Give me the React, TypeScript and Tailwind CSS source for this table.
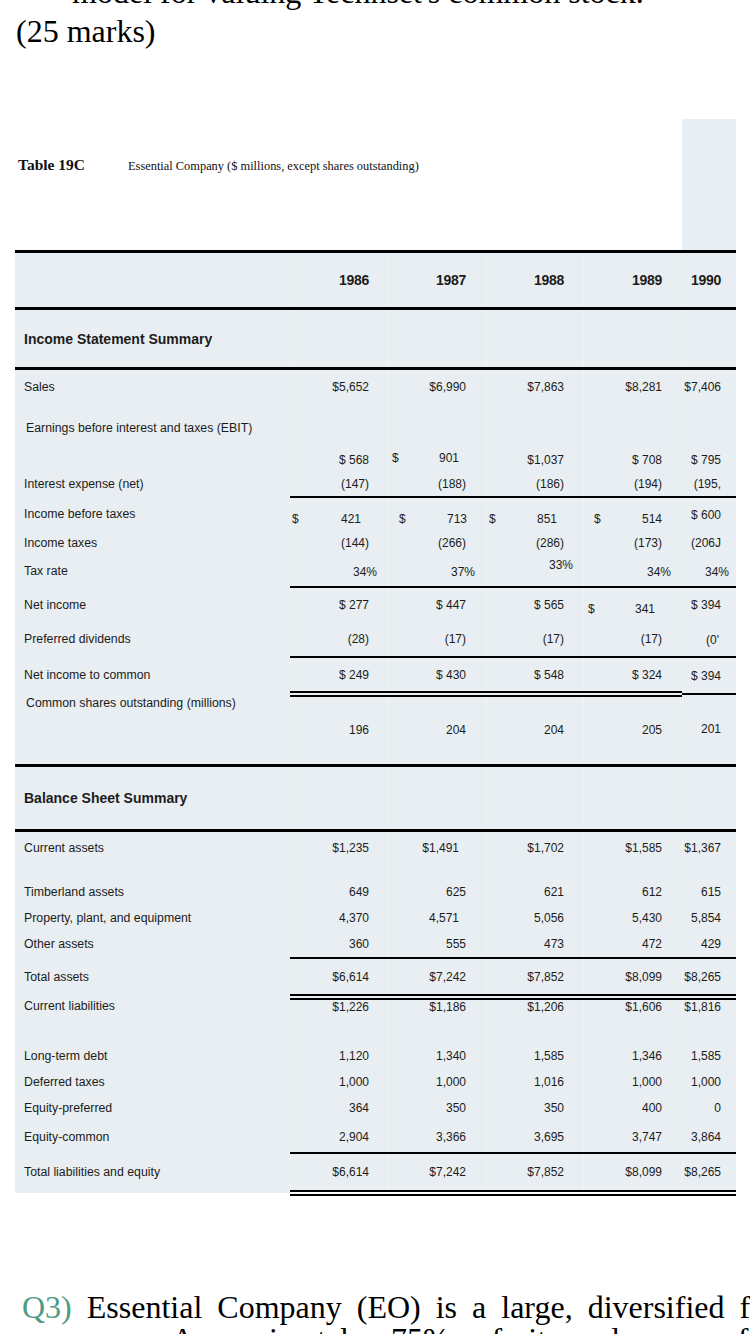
type Cell = { v: string; d?: string; pr?: string; y?: string };

const c = (v: string, o: Partial<Cell> = {}): Cell => ({ v, ...o });
const n = (...vals: string[]): Cell[] => vals.map((v) => ({ v }));

// column widths and default right padding (right edges at 369/466/564/662/721)
const COLS = ["w-[98px]", "w-[98px]", "w-[97px]", "w-[99px]", "w-[54px]"];
const PR = ["pr-[19px]", "pr-[20px]", "pr-[19px]", "pr-[20px]", "pr-[15px]"];

const EMPTY: Cell[] = n("", "", "", "", "");

function Row({
  label,
  cells = EMPTY,
  h,
  lc = "text-[12.3px]",
}: {
  label?: React.ReactNode;
  cells?: Cell[];
  h: string;
  lc?: string;
}) {
  return (
    <div className={`flex ${h}`}>
      <div className={`w-[275px] flex items-center pl-[9px] whitespace-nowrap ${lc}`}>{label}</div>
      {cells.map((cell, i) => (
        <div
          key={i}
          className={`${COLS[i]} flex items-center border-l border-[#eef3f5] whitespace-nowrap ${cell.y ?? ""}`}
        >
          {cell.d && <span className={cell.d}>$</span>}
          <span className={`ml-auto ${cell.pr ?? PR[i]}`}>{cell.v}</span>
        </div>
      ))}
    </div>
  );
}

const Thick = () => <div className="h-[3px] bg-black" />;
const Part = () => <div className="ml-[275px] h-[2px] bg-black" />;
const Double = ({ h = "h-[6px]", ml = "ml-[275px]" }: { h?: string; ml?: string }) => (
  <div className={`${ml} flex flex-col justify-between ${h}`}>
    <div className="h-[2px] bg-black" />
    <div className="h-[2px] bg-black" />
  </div>
);

export default function App() {
  return (
    <div className="w-[750px] h-[1334px] overflow-hidden bg-white text-[#1c1c1c]">
      {/* question text above the table */}
      <div className="h-[119px] flex flex-col pl-[16px] font-['Liberation_Serif','Times_New_Roman',serif] text-[32px] leading-[36px] text-black">
        <p className="-mt-[26px] pl-[56px] whitespace-nowrap">model for valuing Technset's common stock.</p>
        <p className="mt-[3px]">(25 marks)</p>
      </div>

      <div className="ml-[15px] w-[721px] font-['Liberation_Sans',Arial,sans-serif] text-[12px] leading-[14px]">
        {/* title */}
        <div className="flex h-[131px]">
          <div className="flex-1 flex items-baseline pt-[39px] pl-[3px] font-['Liberation_Serif','Times_New_Roman',serif] text-[#111]">
            <span className="text-[15.5px] font-bold w-[110px]">Table 19C</span>
            <span className="text-[12.4px]">Essential Company ($ millions, except shares outstanding)</span>
          </div>
          <div className="w-[54px] bg-[#e8eef1]" />
        </div>

        <div className="bg-[#e8eef1]">
          <Thick />
          <Row
            h="h-[54px]"
            cells={["1986", "1987", "1988", "1989", "1990"].map((v) => ({ v, y: "font-bold text-[14px] tracking-[-0.3px]" }))}
          />
          <Thick />
          <Row h="h-[57px]" label="Income Statement Summary" lc="font-bold text-[14px]" />
          <Thick />
          <Row h="h-[34px]" label="Sales" cells={n("$5,652", "$6,990", "$7,863", "$8,281", "$7,406")} />
          <Row h="h-[44px]" label="Earnings before interest and taxes (EBIT)" lc="text-[12.3px] pl-[11px] pt-[4px]" />
          <Row
            h="h-[23px]"
            cells={[
              c("$ 568"),
              c("901", { d: "pl-[3px]", pr: "pr-[27px]", y: "pb-[3px]" }),
              c("$1,037"),
              c("$ 708"),
              c("$ 795"),
            ]}
          />
          <Row h="h-[25px]" label="Interest expense (net)" cells={n("(147)", "(188)", "(186)", "(194)", "(195,")} />
          <Part />
          <Row
            h="h-[32px]"
            label="Income before taxes"
            cells={[
              c("421", { d: "pl-[1px]", pr: "pr-[27px]", y: "pt-[9px]" }),
              c("713", { d: "pl-[10px]", pr: "pr-[19px]", y: "pt-[9px]" }),
              c("851", { d: "pl-[2px]", pr: "pr-[26px]", y: "pt-[9px]" }),
              c("514", { d: "pl-[10px]", pr: "pr-[20px]", y: "pt-[9px]" }),
              c("$ 600", { y: "pt-[1px]" }),
            ]}
          />
          <Row h="h-[26px]" label="Income taxes" cells={n("(144)", "(266)", "(286)", "(173)", "(206J")} />
          <Row
            h="h-[30px]"
            label="Tax rate"
            cells={[
              c("34%", { pr: "pr-[11px]", y: "pt-[2px]" }),
              c("37%", { pr: "pr-[11px]", y: "pt-[2px]" }),
              c("33%", { pr: "pr-[10px]", y: "pb-[12px]" }),
              c("34%", { pr: "pr-[11px]", y: "pt-[2px]" }),
              c("34%", { pr: "pr-[7px]", y: "pt-[2px]" }),
            ]}
          />
          <Part />
          <Row
            h="h-[33px]"
            label="Net income"
            cells={[
              c("$ 277"),
              c("$ 447"),
              c("$ 565"),
              c("341", { d: "pl-[4px]", pr: "pr-[27px]", y: "pt-[8px]" }),
              c("$ 394"),
            ]}
          />
          <Row
            h="h-[35px]"
            label="Preferred dividends"
            cells={[c("(28)"), c("(17)"), c("(17)"), c("(17)"), c("(0'", { pr: "pr-[17px]", y: "pt-[2px]" })]}
          />
          <Part />
          <Row
            h="h-[33px]"
            label="Net income to common"
            cells={[c("$ 249"), c("$ 430"), c("$ 548"), c("$ 324"), c("$ 394", { y: "pt-[3px]" })]}
          />
          <div className="ml-[275px] flex h-[6px]">
            <div className="w-[392px] flex flex-col justify-between">
              <div className="h-[2px] bg-black" />
              <div className="h-[2px] bg-black" />
            </div>
            <div className="flex-1 flex items-center">
              <div className="h-[2px] w-full bg-black" />
            </div>
          </div>
          <Row
            h="h-[12px]"
            label="Common shares outstanding (millions)"
            lc="text-[12.3px] pl-[11px] items-start -mt-[1px]"
          />
          <Row
            h="h-[55px]"
            cells={[
              c("196", { y: "pb-[13px]" }),
              c("204", { y: "pb-[13px]" }),
              c("204", { y: "pb-[13px]" }),
              c("205", { y: "pb-[13px]" }),
              c("201", { y: "pb-[15px]" }),
            ]}
          />
          <Thick />
          <Row h="h-[62px]" label="Balance Sheet Summary" lc="font-bold text-[14px]" />
          <Thick />
          <Row
            h="h-[32px]"
            label="Current assets"
            cells={[c("$1,235"), c("$1,491", { pr: "pr-[27px]" }), c("$1,702"), c("$1,585"), c("$1,367")]}
          />
          <Row h="h-[14px]" />
          <Row h="h-[27px]" label="Timberland assets" cells={n("649", "625", "621", "612", "615")} />
          <Row
            h="h-[26px]"
            label="Property, plant, and equipment"
            cells={[c("4,370"), c("4,571", { pr: "pr-[27px]" }), c("5,056"), c("5,430"), c("5,854")]}
          />
          <Row h="h-[26px]" label="Other assets" cells={n("360", "555", "473", "472", "429")} />
          <Part />
          <Row h="h-[35px]" label="Total assets" cells={n("$6,614", "$7,242", "$7,852", "$8,099", "$8,265")} />
          <Double />
          <Row
            h="h-[14px]"
            label="Current liabilities"
            lc="text-[12.3px] pb-[3px]"
            cells={n("$1,226", "$1,186", "$1,206", "$1,606", "$1,816")}
          />
          <Row h="h-[28px]" />
          <Row h="h-[27px]" label="Long-term debt" cells={n("1,120", "1,340", "1,585", "1,346", "1,585")} />
          <Row h="h-[26px]" label="Deferred taxes" cells={n("1,000", "1,000", "1,016", "1,000", "1,000")} />
          <Row h="h-[26px]" label="Equity-preferred" cells={n("364", "350", "350", "400", "0")} />
          <Row h="h-[31px]" label="Equity-common" cells={n("2,904", "3,366", "3,695", "3,747", "3,864")} />
          <Part />
          <Row
            h="h-[36px]"
            label="Total liabilities and equity"
            cells={n("$6,614", "$7,242", "$7,852", "$8,099", "$8,265")}
          />
        </div>
        <div className="flex">
          <div className="w-[275px] h-[3px] bg-[#e8eef1]" />
          <Double h="h-[6px]" ml="flex-1" />
        </div>
      </div>

      {/* Q3 */}
      <div className="mt-[95px] pl-[22px] font-['Liberation_Serif','Times_New_Roman',serif] text-[32px] leading-[32px] text-black">
        <div className="flex gap-[15px] whitespace-nowrap">
          <span className="text-[#4f9c84]">Q3)</span>
          <span>Essential</span>
          <span>Company</span>
          <span>(EO)</span>
          <span>is</span>
          <span>a</span>
          <span>large,</span>
          <span>diversified</span>
          <span>forest</span>
        </div>
        <div className="flex gap-[26px] whitespace-nowrap">
          <span>company.</span>
          <span>Approximately</span>
          <span>75%</span>
          <span>of</span>
          <span>its</span>
          <span>sales</span>
          <span>are</span>
          <span>from</span>
        </div>
      </div>
    </div>
  );
}
